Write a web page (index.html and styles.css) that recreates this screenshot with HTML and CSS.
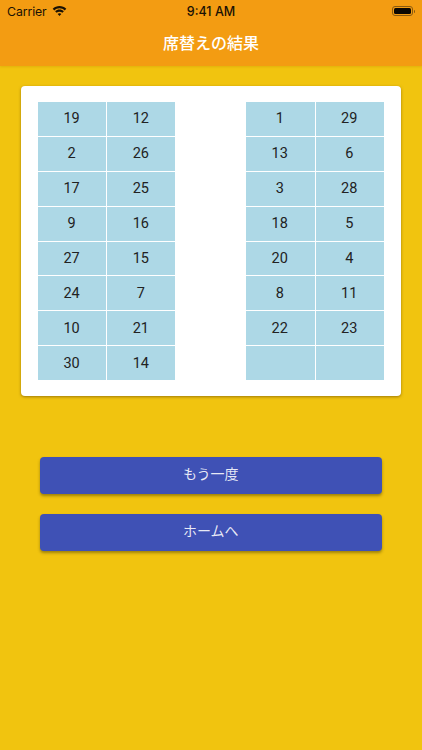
FILE: index.html
```html
<!DOCTYPE html>
<html lang="ja">
<head>
<meta charset="utf-8">
<title>席替えの結果</title>
<link rel="stylesheet" href="styles.css">
</head>
<body>
<div class="app">
  <header class="header">
    <div class="status">
      <div class="status-left">
        <span class="carrier">Carrier</span>
        <svg class="wifi" width="15" height="11" viewBox="0 0 16 12"><path d="M8 2.500c2.200 0 4.200.9 5.700 2.300L15.400 3C13.400 1.100 10.800 0 8 0S2.600 1.100.6 3l1.700 1.800C3.800 3.400 5.800 2.500 8 2.500z"/><path d="M8 6.200c1.200 0 2.300.5 3.100 1.200l1.700-1.800C11.500 4.400 9.800 3.700 8 3.700s-3.500.7-4.800 1.900l1.700 1.800C5.700 6.700 6.800 6.200 8 6.200z"/><path d="M8 7.900c-.8 0-1.500.3-2 .8l2 2.300 2-2.300c-.5-.5-1.200-.8-2-.8z"/></svg>
      </div>
      <span class="time">9:41 AM</span>
      <div class="battery"><span class="battery-fill"></span></div>
    </div>
    <h1 class="title">席替えの結果</h1>
  </header>
  <main class="main">
    <section class="card">
      <div class="seats seats-left">
        <div class="cell">19</div><div class="cell">12</div>
        <div class="cell">2</div><div class="cell">26</div>
        <div class="cell">17</div><div class="cell">25</div>
        <div class="cell">9</div><div class="cell">16</div>
        <div class="cell">27</div><div class="cell">15</div>
        <div class="cell">24</div><div class="cell">7</div>
        <div class="cell">10</div><div class="cell">21</div>
        <div class="cell">30</div><div class="cell">14</div>
      </div>
      <div class="seats seats-right">
        <div class="cell">1</div><div class="cell">29</div>
        <div class="cell">13</div><div class="cell">6</div>
        <div class="cell">3</div><div class="cell">28</div>
        <div class="cell">18</div><div class="cell">5</div>
        <div class="cell">20</div><div class="cell">4</div>
        <div class="cell">8</div><div class="cell">11</div>
        <div class="cell">22</div><div class="cell">23</div>
        <div class="cell"></div><div class="cell"></div>
      </div>
    </section>
    <div class="actions">
      <button class="btn" type="button">もう一度</button>
      <button class="btn" type="button">ホームへ</button>
    </div>
  </main>
</div>
</body>
</html>
```
FILE: styles.css
```css
* { box-sizing: border-box; }
html, body { margin: 0; padding: 0; height: 100%; }
body { font-family: Roboto, "Noto Sans CJK JP", sans-serif; overflow: hidden; }
.app { width: 422px; height: 750px; background: #f1c40f; display: flex; flex-direction: column; }
.header { height: 66px; background: #f39c12; box-shadow: 0 1px 2px rgba(180,120,0,.25); display: flex; flex-direction: column; flex: none; }
.status { height: 22px; padding: 0 9px 0 7px; display: flex; align-items: center; justify-content: space-between; position: relative; color: #1a1204; }
.status-left { display: flex; align-items: center; gap: 5px; }
.carrier { font: 12.300px "Inter", "Liberation Sans", sans-serif; letter-spacing: -.1px; }
.wifi { fill: #1a1204; }
.time { position: absolute; left: 0; right: 0; text-align: center; font: 500 12.500px "Inter", "Liberation Sans", sans-serif; }
.battery { width: 21px; height: 10px; border: 1px solid #8a5a10; border-radius: 3px; padding: 1px; position: relative; }
.battery::after { content: ""; position: absolute; right: -3px; top: 2.500px; width: 1.500px; height: 3px; background: #8a5a10; border-radius: 0 1px 1px 0; }
.battery-fill { display: block; width: 100%; height: 100%; background: #0c0802; border-radius: 1.500px; }
.title { margin: 0; flex: 1; display: flex; align-items: center; justify-content: center; padding-bottom: 4px; color: #fff; font: 500 16px "Noto Sans CJK JP", sans-serif; }
.main { flex: 1; display: flex; flex-direction: column; }
.card { margin: 20px 21.500px 0 21px; width: 380px; height: 310px; padding: 16px 17px 16px 16.500px; background: #fff; border-radius: 4px; box-shadow: 0 1px 3px rgba(90,60,0,.55); display: flex; justify-content: space-between; }
.seats { display: grid; grid-template-columns: 1fr 1fr; grid-template-rows: repeat(8, 1fr); gap: 1px; }
.seats-left { width: 137.500px; }
.seats-right { width: 138px; }
.cell { background: #add8e6; display: flex; align-items: center; justify-content: center; color: #222; font-size: 14.500px; }
.seats-right .cell { padding-right: 1px; }
.actions { margin: 61px 40.500px 0 40px; display: flex; flex-direction: column; gap: 20.500px; }
.btn { height: 36.500px; border: 0; border-radius: 4px; background: #3f51b5; color: rgba(255,255,255,.88); font: 400 14px "Noto Sans CJK JP", sans-serif; box-shadow: 0 2px 3px rgba(60,50,0,.45); padding: 0 0 5px; }
```
